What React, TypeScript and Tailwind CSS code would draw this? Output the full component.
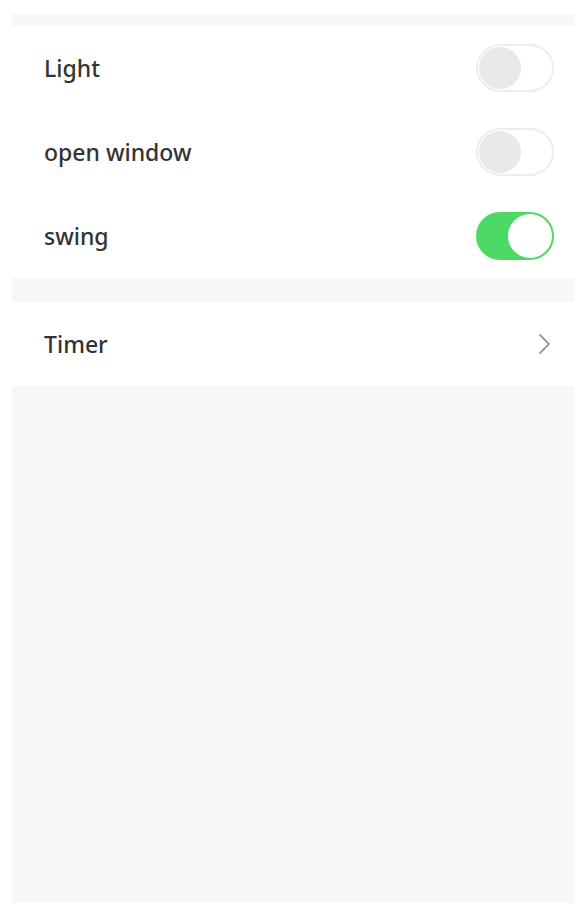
import React from "react";

function Toggle({ on }: { on: boolean }) {
  if (on) {
    return (
      <div className="w-[78px] h-[48px] rounded-full bg-[#4cd964] flex items-center justify-end p-[2px]">
        <div className="w-[44px] h-[44px] rounded-full bg-white" />
      </div>
    );
  }
  return (
    <div className="w-[78px] h-[48px] rounded-full bg-white border-2 border-[#ededed] flex items-center justify-start p-[1px]">
      <div className="w-[42px] h-[42px] rounded-full bg-[#e9e9e9]" />
    </div>
  );
}

function Row({ label, on }: { label: string; on: boolean }) {
  return (
    <div className="h-[84px] flex items-center justify-between pl-[32px] pr-[20px] bg-white">
      <span className="text-[23px] text-[#333333] font-medium">{label}</span>
      <Toggle on={on} />
    </div>
  );
}

export default function App() {
  return (
    <div
      className="w-[584px] h-[907px] bg-white pt-[14px] pb-[4px]"
      style={{ fontFamily: '"Noto Sans", "Open Sans", sans-serif' }}
    >
      <div className="mx-[12px] w-[562px] h-full flex flex-col">
        <div className="h-[12px] bg-[#f7f7f7]" />
        <Row label="Light" on={false} />
        <Row label="open window" on={false} />
        <Row label="swing" on={true} />
        <div className="h-[24px] bg-[#f7f7f7]" />
        <div className="h-[84px] flex items-center justify-between pl-[32px] pr-[22px] bg-white">
          <span className="text-[23px] text-[#333333] font-medium">Timer</span>
          <svg width="14" height="22" viewBox="0 0 14 22" fill="none">
            <path d="M2 2 L11 11 L2 20" stroke="#9a9a9a" strokeWidth="1.8" strokeLinecap="round" strokeLinejoin="round" />
          </svg>
        </div>
        <div className="flex-1 bg-[#f7f7f7]" />
      </div>
    </div>
  );
}
